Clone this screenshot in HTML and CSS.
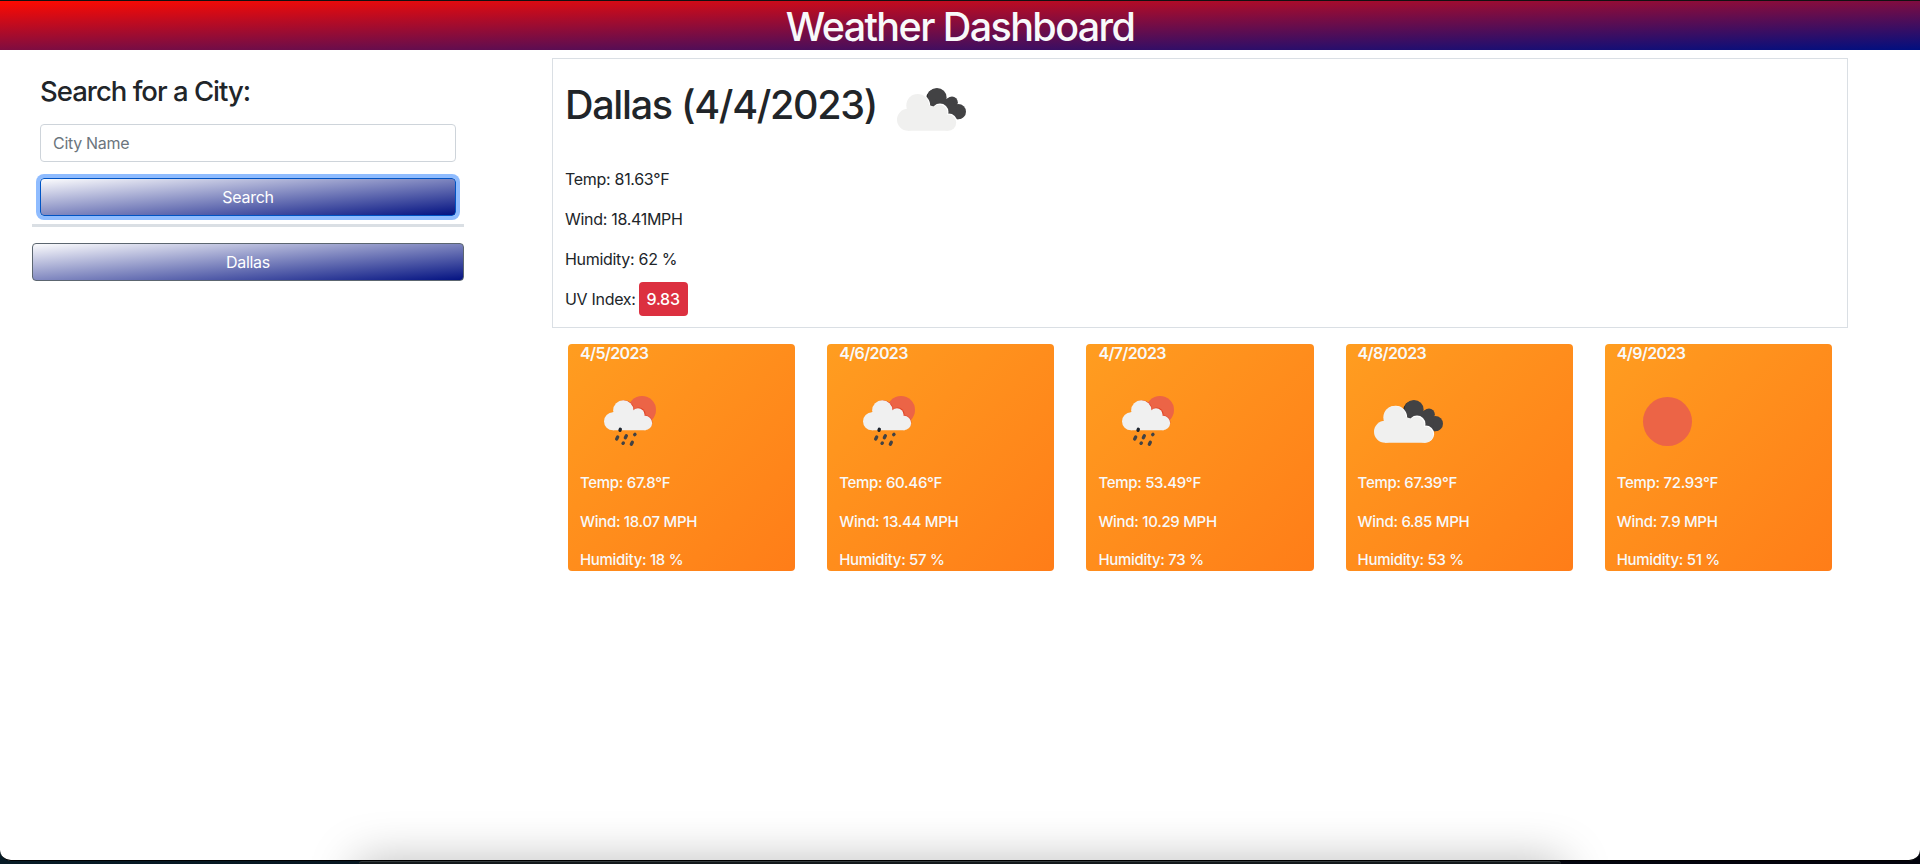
FILE: index.html
```html
<!DOCTYPE html>
<html lang="en">
<head>
<meta charset="utf-8">
<title>Weather Dashboard</title>
<link rel="stylesheet" href="styles.css">
</head>
<body>
<svg class="defs" aria-hidden="true">
  <symbol id="clouds" viewBox="-12 -48 300 300">
    <g fill="#232324"><circle cx="153" cy="70" r="29"/><circle cx="198" cy="85" r="18"/><circle cx="217" cy="111" r="22"/><path d="M140 78h70v54h-20z"/></g>
    <g fill="#424244"><circle cx="156" cy="68" r="29"/><circle cx="201" cy="82" r="17.500"/><circle cx="220" cy="110" r="23"/><path d="M150 72l50 0 15 30v30l-30-10z"/></g>
    <g fill="#fff"><circle cx="101" cy="91" r="34.500"/><circle cx="165" cy="111" r="25.500"/><circle cx="191" cy="141" r="25.500"/></g>
    <g fill="#f0f0ef"><circle cx="98" cy="91" r="34"/><circle cx="163" cy="113" r="24"/><circle cx="69" cy="134" r="33"/><circle cx="189" cy="143" r="24.500"/><path d="M66 100l35-20 62 20 27 30v37.500H69z"/></g>
  </symbol>
  <symbol id="rain" viewBox="-30 -42 300 300">
    <circle cx="156" cy="75" r="42" fill="#ec6446"/>
    <g fill="#e04326"><circle cx="103" cy="76" r="30"/><circle cx="146" cy="88" r="20.500"/><circle cx="166" cy="112" r="21"/></g>
    <g fill="#f0f0f0"><circle cx="100" cy="76" r="30.500"/><circle cx="144" cy="90" r="20"/><circle cx="69" cy="109" r="27"/><circle cx="165" cy="114" r="21.500"/><path d="M68 82l33-14 44 20 22 20v27.500H69z"/></g>
    <g stroke="#424244" stroke-width="10" stroke-linecap="round"><path d="M80 162l3-6M106 158l3-6M124 178l3-6M99 175l1-1M134 149l1-1"/><path d="M90 136l1-3" stroke="#1d2530"/></g>
  </symbol>
  <symbol id="sun" viewBox="0 0 100 100"><circle cx="50.500" cy="50.500" r="24.500" fill="#ec6446"/></symbol>
</svg>
<div class="page">
  <header class="header"><h1>Weather Dashboard</h1></header>
  <div class="columns">
    <aside class="sidebar">
      <form class="search">
        <h3 class="search-title">Search for a City:</h3>
        <input class="city" type="text" placeholder="City Name">
        <button class="btn btn-search" type="button">Search</button>
      </form>
      <div class="rule"></div>
      <button class="btn btn-city" type="button">Dallas</button>
    </aside>
    <main class="main">
      <section class="today">
        <h1 class="today-title"><span>Dallas (4/4/2023)</span><svg class="icon"><use href="#clouds"/></svg></h1>
        <p>Temp: 81.63°F</p>
        <p>Wind: 18.41MPH</p>
        <p>Humidity: 62 %</p>
        <p class="uv">UV Index: <span class="badge">9.83</span></p>
      </section>
      <section class="forecast">
        <article class="card"><h5>4/5/2023</h5><svg class="icon"><use href="#rain"/></svg><p>Temp: 67.8°F</p><p>Wind: 18.07 MPH</p><p>Humidity: 18 %</p></article>
        <article class="card"><h5>4/6/2023</h5><svg class="icon"><use href="#rain"/></svg><p>Temp: 60.46°F</p><p>Wind: 13.44 MPH</p><p>Humidity: 57 %</p></article>
        <article class="card"><h5>4/7/2023</h5><svg class="icon"><use href="#rain"/></svg><p>Temp: 53.49°F</p><p>Wind: 10.29 MPH</p><p>Humidity: 73 %</p></article>
        <article class="card"><h5>4/8/2023</h5><svg class="icon"><use href="#clouds"/></svg><p>Temp: 67.39°F</p><p>Wind: 6.85 MPH</p><p>Humidity: 53 %</p></article>
        <article class="card"><h5>4/9/2023</h5><svg class="icon"><use href="#sun"/></svg><p>Temp: 72.93°F</p><p>Wind: 7.9 MPH</p><p>Humidity: 51 %</p></article>
      </section>
    </main>
  </div>
  <div class="dock-shadow"></div>
</div>
<div class="dock"></div>
</body>
</html>
```
FILE: styles.css
```css
* { box-sizing: border-box; }
html { background: #000; }
body {
  margin: 0;
  height: 864px;
  overflow: hidden;
  background: linear-gradient(90deg, #071b26, #02030c 90%);
  color: #212529;
  font: 400 16px/24px Inter, "Liberation Sans", sans-serif;
  letter-spacing: -0.3px;
}
.defs { position: absolute; width: 0; height: 0; }
h1, h3, h5, p { margin: 0; font-weight: 500; }
.page {
  position: relative;
  height: 861px;
  overflow: hidden;
  background: #fff;
  border-top: 1px solid #111;
  border-bottom: 1px solid #000;
  border-radius: 0 0 11px 11px;
}
.header {
  height: 49px;
  padding-top: 2px;
  background: linear-gradient(to bottom right, #ff0a00, #000f80);
  text-align: center;
}
.header h1 {
  color: #f8f9fa;
  font-size: 39.5px;
  font-weight: 550;
  line-height: 48px;
  letter-spacing: -1.6px;
}
.columns { display: flex; }
.sidebar { width: 432px; margin-left: 32px; padding-top: 24px; }
.search { padding: 0 8px; }
.search-title {
  font-size: 27.5px;
  font-weight: 550;
  line-height: 34px;
  letter-spacing: -1px;
}
.city {
  display: block;
  width: 100%;
  height: 38px;
  margin-top: 16px;
  padding: 6px 12px;
  border: 1px solid #ced4da;
  border-radius: 4px;
  font: inherit;
  letter-spacing: inherit;
}
.city::placeholder { color: #6c757d; opacity: 1; }
.btn {
  display: block;
  width: 100%;
  height: 38px;
  padding: 0;
  border: 1px solid #6c757d;
  border-radius: 4px;
  background: linear-gradient(to bottom right, #fff, #000f80) border-box;
  color: #fff;
  font: inherit;
  letter-spacing: inherit;
}
.btn-search {
  margin-top: 16px;
  border-color: #0054c4;
  box-shadow: 0 0 0 4px #8fbcff;
}
.rule { height: 3px; margin-top: 8px; background: #dadfe4; }
.btn-city { margin-top: 16px; border-color: #5c6670; }
.main { width: 1296px; margin-left: 88px; padding-top: 8px; }
.today { height: 270px; padding-left: 12px; border: 1px solid #dadfe4; }
.today-title {
  display: flex;
  height: 100px;
  font-size: 39.5px;
  font-weight: 550;
  line-height: 93px;
  letter-spacing: -1.3px;
}
.today-title span { width: 316px; white-space: nowrap; }
.icon { display: block; width: 100px; height: 100px; flex: none; }
.today p { height: 24px; margin-top: 16px; font-weight: 400; }
.today .today-title + p { margin-top: 8px; }
.today .uv {
  display: flex;
  align-items: center;
  gap: 3px;
}
.badge {
  height: 34px;
  padding: 0 8px;
  border-radius: 4px;
  background: #dc3040;
  color: #fff;
  line-height: 34px;
  font-weight: 500;
}
.forecast {
  display: grid;
  grid-template-columns: repeat(5, 227.2px);
  gap: 32px;
  padding: 16px 16px 0;
}
.card {
  height: 227px;
  padding-left: 12px;
  border-radius: 4px;
  background: linear-gradient(135deg, #ff9d20, #ff7d18);
  color: #f8f9fa;
}
.card h5 {
  height: 27px;
  font-size: 16px;
  font-weight: 600;
  line-height: 19px;
  letter-spacing: -0.65px;
}
.card p { height: 22px; margin-bottom: 16.500px; font-size: 15px; line-height: 22px; }
.card .icon + p { margin-top: 1px; }
.dock-shadow {
  position: absolute;
  left: 361px;
  top: 864px;
  width: 1198px;
  height: 80px;
  box-shadow: 0 0 48px 4px rgba(0, 0, 0, 0.27);
}
.dock {
  position: absolute;
  left: 359px;
  top: 861px;
  width: 1202px;
  height: 3px;
  border-top: 1px solid #333a3d;
  border-radius: 10px 10px 0 0;
  background: #13191c;
}
```
